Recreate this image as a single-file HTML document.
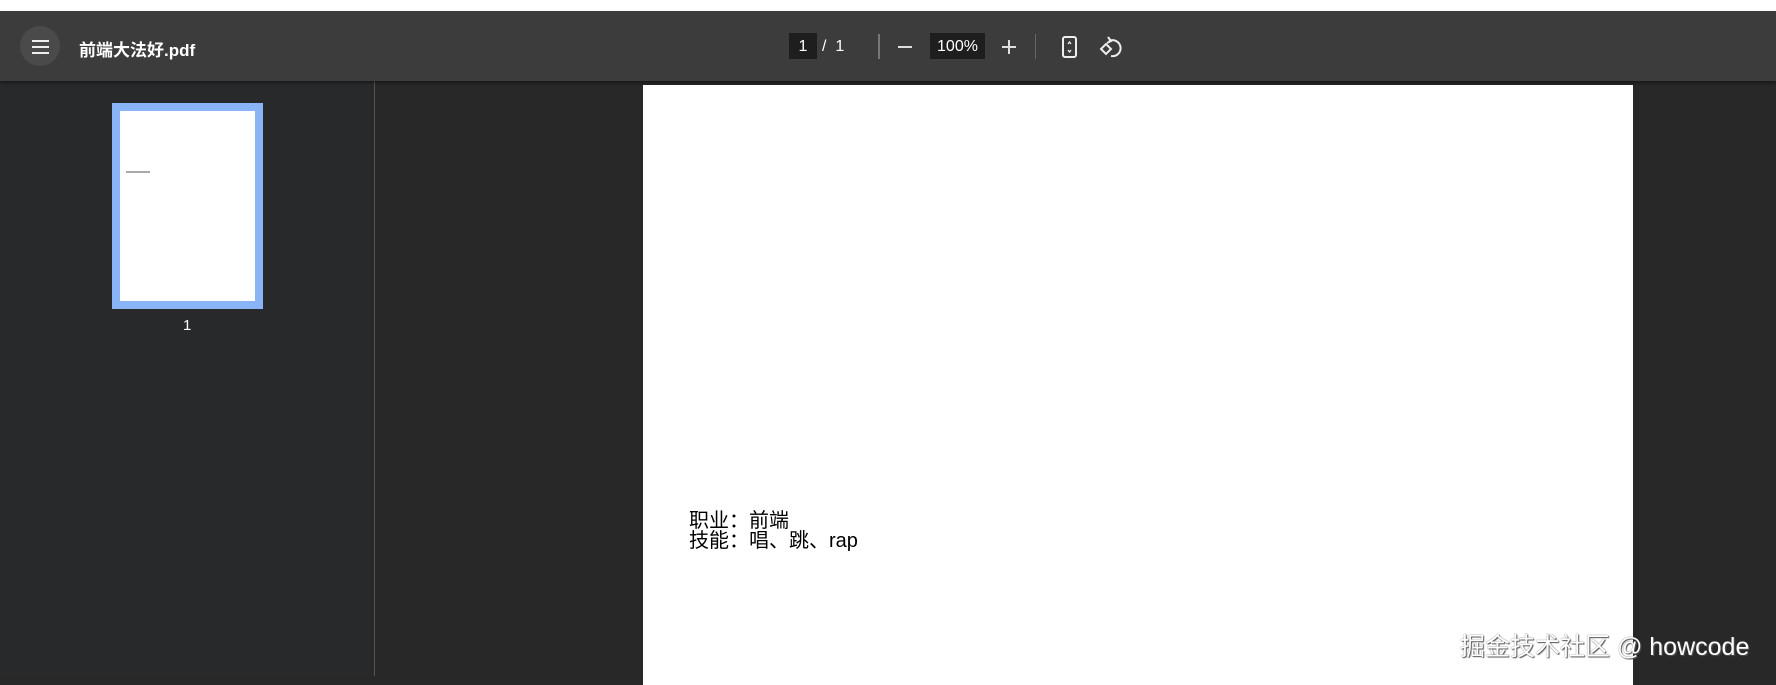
<!DOCTYPE html>
<html><head><meta charset="utf-8"><style>
*{margin:0;padding:0;box-sizing:border-box}
body{width:1776px;height:676px;overflow:hidden;background:#282828;font-family:"Liberation Sans","Noto Sans CJK SC",sans-serif;position:relative}
.top{position:absolute;left:0;top:0;width:1776px;height:11px;background:#fff}
.bar{position:absolute;left:0;top:11px;width:1776px;height:70px;background:#3c3c3c;box-shadow:0 2px 3px rgba(0,0,0,.4)}
.abs{position:absolute}
.side{position:absolute;left:0;top:81px;width:375px;height:595px;background:#28292b;border-right:1px solid #555}
.page{position:absolute;left:643px;top:85px;width:990px;height:600px;background:#fff}
.w{color:#fff}
</style></head><body>
<div class="top"></div>
<div class="side"></div>
<div class="bar">
 <div class="abs" style="left:20px;top:15px;width:40px;height:40px;border-radius:50%;background:#4a4a4a"></div>
 <div class="abs" style="left:32px;top:29px;width:17px;height:2px;background:#eee;box-shadow:0 6px 0 #eee,0 12px 0 #eee"></div>
 <div class="abs w" style="left:79px;top:25px;font-size:17px;font-weight:bold">前端大法好.pdf</div>
 <div class="abs w" style="left:789px;top:22px;width:28px;height:26px;background:#1e1e1e;font-size:16px;text-align:center;line-height:28px">1</div>
 <div class="abs w" style="left:822px;top:22px;font-size:16px;line-height:28px">/&nbsp;&nbsp;1</div>
 <div class="abs" style="left:878px;top:23px;width:2px;height:25px;background:#777"></div>
 <div class="abs" style="left:898px;top:35px;width:14px;height:2px;background:#ddd"></div>
 <div class="abs w" style="left:930px;top:22px;width:55px;height:26px;background:#1e1e1e;font-size:16px;text-align:center;line-height:28px">100%</div>
 <div class="abs" style="left:1002px;top:35px;width:14px;height:2px;background:#ddd"></div>
 <div class="abs" style="left:1008px;top:29px;width:2px;height:14px;background:#ddd"></div>
 <div class="abs" style="left:1035px;top:23px;width:1px;height:25px;background:#666"></div>
 <svg class="abs" style="left:1060px;top:24px" width="20" height="24" viewBox="0 0 20 24"><rect x="3" y="2" width="13" height="20" rx="2" fill="none" stroke="#eee" stroke-width="2"/><path d="M8 9l1.5-2 1.5 2M8 15l1.5 2 1.5-2" stroke="#eee" stroke-width="1.3" fill="none"/></svg>
 <svg class="abs" style="left:1098px;top:23px" width="26" height="26" viewBox="0 0 26 26"><path d="M3 15l5-5 5 5-5 5z" fill="none" stroke="#eee" stroke-width="2"/><path d="M11 7a8 8 0 1 1 2 15" fill="none" stroke="#eee" stroke-width="2"/><path d="M10 3l3 4-4 2" fill="none" stroke="#eee" stroke-width="2"/></svg>
</div>
<div class="abs" style="left:112px;top:103px;width:151px;height:206px;background:#8ab4f8"></div>
<div class="abs" style="left:120px;top:111px;width:135px;height:190px;background:#fff"></div>
<div class="abs" style="left:126px;top:171px;width:24px;height:2px;background:#aaa"></div>
<div class="abs w" style="left:183px;top:317px;font-size:15px">1</div>
<div class="page">
 <div class="abs" style="left:46px;top:426px;font-size:20px;line-height:20px;color:#000">职业：前端<br>技能：唱、跳、rap</div>
</div>
<div class="abs" style="left:1460px;top:627px;font-size:25px;color:#fff;text-shadow:1px 1px 1px #555,0 0 1px #444">掘金技术社区 @ howcode</div>
</body></html>
